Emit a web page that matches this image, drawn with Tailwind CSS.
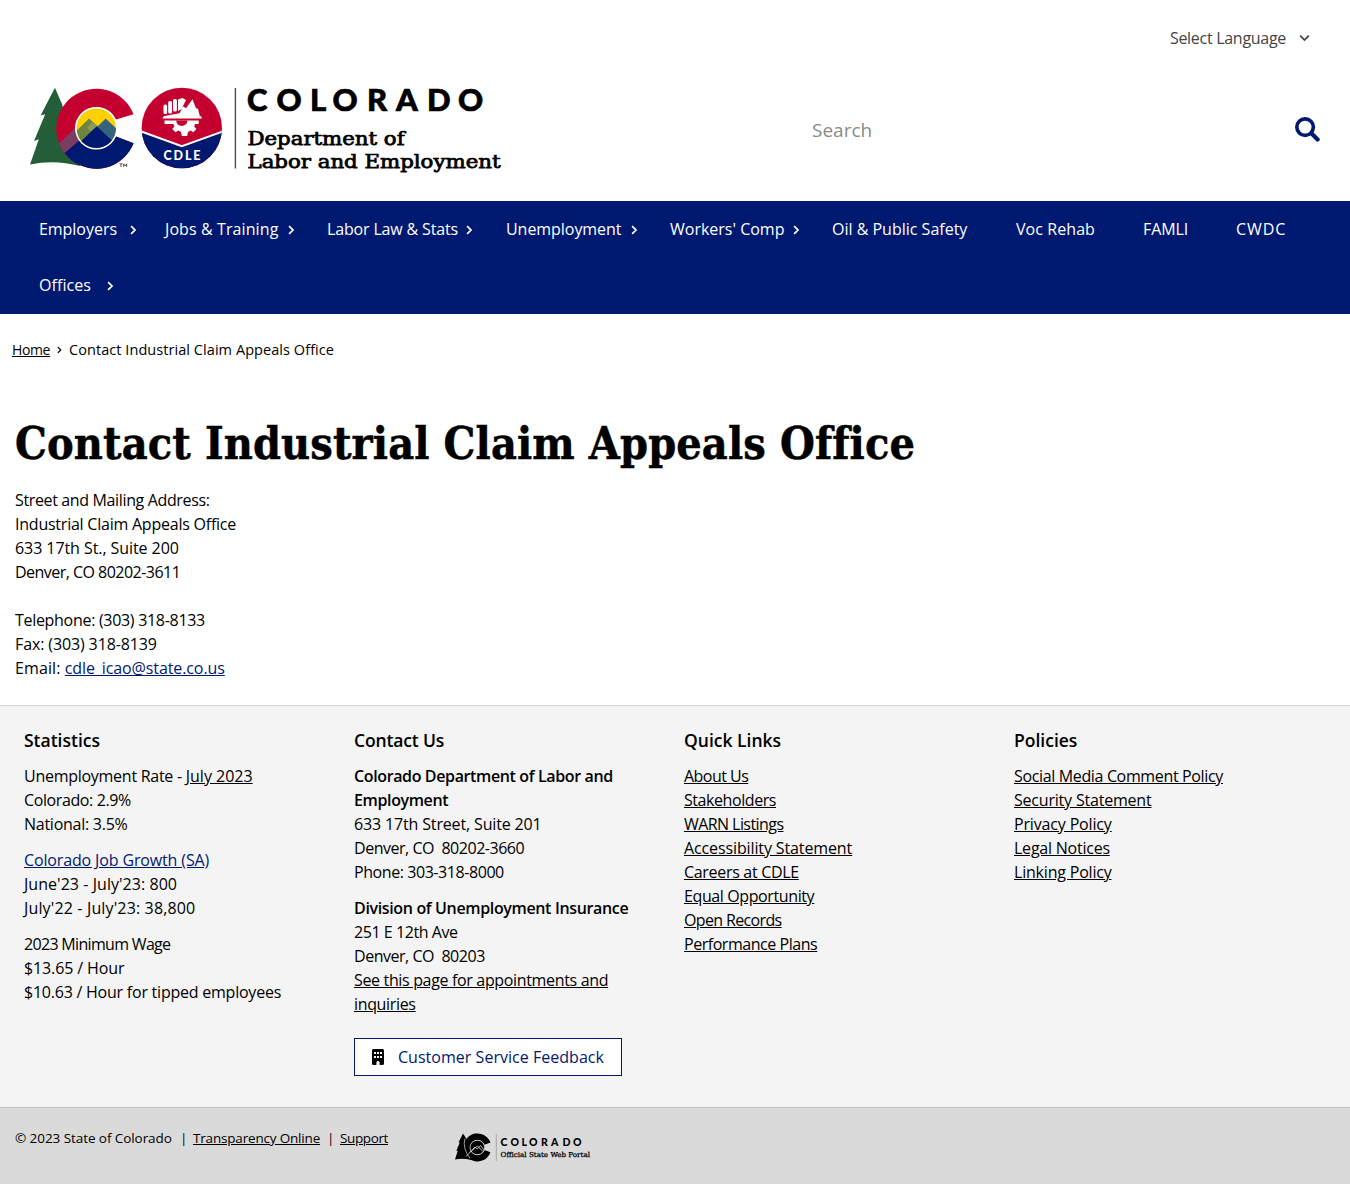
<!DOCTYPE html>
<html lang="en">
<head>
<meta charset="utf-8">
<title>Contact Industrial Claim Appeals Office</title>
<script src="https://cdn.jsdelivr.net/npm/@tailwindcss/browser@4"></script>
</head>
<body class="bg-white text-black font-['Open_Sans',sans-serif] text-base leading-6">
<svg class="hidden">
  <symbol id="chev" viewBox="0 0 8 10"><path d="M1.100 1.200 5 5l-3.900 3.800" fill="none" stroke="currentColor" stroke-width="1.700"/></symbol>
</svg>

<header class="h-[201px] flex flex-col">
  <div class="h-[76px] pr-10 flex items-center justify-end text-[#444] tracking-[-0.29px]">
    <span>Select Language</span>
    <svg class="w-[11px] h-[8px] ml-[13px]" viewBox="0 0 11 8"><path d="M1.200 1.600 5.500 6l4.300-4.400" fill="none" stroke="currentColor" stroke-width="1.700"/></svg>
  </div>
  <div class="flex-1 flex px-[30px]">
    <svg class="w-[475px] h-[100px] mt-1 shrink-0" viewBox="30 80 475 100">
      <!-- pine tree -->
      <path d="M54.900 87.800 40.600 115.400l4.600-1.100L34 141l4.800-1.800L30 164.600q24-5.500 50 1.400L62 104z" fill="#235e39"/>
      <!-- letter C -->
      <clipPath id="c"><path d="M133.600 114.300A40 40 0 1 0 133.600 143.200L116 136.500A21 21 0 1 1 116 119.500z"/></clipPath>
      <g clip-path="url(#c)">
        <path d="M50 80h90v92H50z" fill="#c3002f"/>
        <path d="M50 152 76 127 90 134 65 160z" fill="#7c3b61"/>
        <path d="M64 153.500 84 136.500h20L140 126v46H60z" fill="#001970"/>
      </g>
      <circle cx="96.300" cy="128.200" r="21.300" fill="#fff"/>
      <clipPath id="i"><circle cx="96.300" cy="128.200" r="19.700"/></clipPath>
      <g clip-path="url(#i)">
        <path d="M76 108h41v41H76z" fill="#ffd100"/>
        <path d="M70 137 89 118.500l9 8-22 22z" fill="#6d8340"/>
        <path d="m97 127 8.700-8.500L122 134v10H100z" fill="#35647e"/>
        <path d="m92.500 121.800 4.500 4.400-6 5.500-4-4z" fill="#8a9a5a"/>
        <path d="M74 148 96.700 126.200 119 147v6H74z" fill="#001970"/>
      </g>
      <path d="m119.500 163.800h3m-1.500 0v3.200m2.700 0v-3.200l1.500 2.200 1.500-2.200v3.200" fill="none" stroke="#333" stroke-width=".8"/>
      <!-- department badge -->
      <clipPath id="b"><circle cx="181.800" cy="128" r="40.200"/></clipPath>
      <g clip-path="url(#b)">
        <path d="M140 86h84v84h-84z" fill="#c3002f"/>
        <path d="M140 131.500 181.800 146.800 224 131.500V172h-84z" fill="#001970"/>
        <path d="M140 131 181.800 146.300 224 131" fill="none" stroke="#fff" stroke-width="2"/>
      </g>
      <g fill="#fff">
        <path d="M162.500 118.600q0-2.600 3.500-2.900l13.500-2.500 3.500-7 3 2 6.500-9 3.500 9 2 .5 1.700 7q2.300.3 2.300 2.900z"/>
        <rect x="163.500" y="104.500" width="3.600" height="9.500" rx="1.500"/>
        <rect x="168.200" y="101" width="3.800" height="12.500" rx="1.500"/>
        <rect x="173" y="99" width="3.900" height="12.500" rx="1.500"/>
        <path d="m178 99.500 4.500-1.500 3.500 2-4.500 9-3.500 2z"/>
        <path d="M164.500 120.400h34.200v3.600h-3.500l-1 2.800 2.300 2.200-3.200 3.300-2.600-1.700-2.700 1.300-.8 4.200h-5.400l-.8-4.200-2.700-1.300-2.800 1.700-3.300-3.300 2.200-2.500-1-2.500h-8.900z"/>
      </g>
      <path d="M176.200 120.400a5.600 5.600 0 1 0 11.200 0z" fill="#c3002f"/>
      <text x="163.500" y="159.500" font-family="Lato" font-weight="900" font-size="12.500" fill="#fff" textLength="37" lengthAdjust="spacing">CDLE</text>
      <path d="M235.400 88v80.500" stroke="#4d4d4d" stroke-width="1.400"/>
      <text x="247 276.500 310 332.500 367 396 427 458" y="111" font-family="Lato" font-weight="900" font-size="31" stroke="#000" stroke-width=".7">COLORADO</text>
      <g font-family="DejaVu Serif, serif" font-size="18.500" stroke="#000" stroke-width=".75">
        <text x="247.500" y="144.500" textLength="157" lengthAdjust="spacingAndGlyphs">Department of</text>
        <text x="247.500" y="168" textLength="253" lengthAdjust="spacingAndGlyphs">Labor and Employment</text>
      </g>
    </svg>
    <div class="ml-auto w-[508px] h-[108px] flex items-center justify-between">
      <span class="text-[19px] text-[#8a8a8a]">Search</span>
      <svg class="w-[25px] h-[25px] -mt-px" viewBox="0 0 26 26" fill="none" stroke="#001970"><circle cx="10.500" cy="10.500" r="8.600" stroke-width="3.800"/><path d="m17 17 6.500 6.500" stroke-width="4.400" stroke-linecap="round"/></svg>
    </div>
  </div>
</header>

<nav class="h-[113px] bg-[#001970] text-white px-[39px]">
  <div class="h-14 flex items-center whitespace-nowrap">
    <a class="w-[126px] flex items-center"><span class="w-[91px] tracking-[-0.04px]">Employers</span><svg class="w-2 h-2.5 mt-0.5"><use href="#chev"/></svg></a>
    <a class="w-[162px] flex items-center"><span class="w-[123px] tracking-[0.1px]">Jobs &amp; Training</span><svg class="w-2 h-2.5 mt-0.5"><use href="#chev"/></svg></a>
    <a class="w-[179px] flex items-center"><span class="w-[139px] tracking-[-0.16px]">Labor Law &amp; Stats</span><svg class="w-2 h-2.5 mt-0.5"><use href="#chev"/></svg></a>
    <a class="w-[164px] flex items-center"><span class="w-[125px] tracking-[-0.05px]">Unemployment</span><svg class="w-2 h-2.5 mt-0.5"><use href="#chev"/></svg></a>
    <a class="w-[162px] flex items-center"><span class="w-[123px]">Workers' Comp</span><svg class="w-2 h-2.5 mt-0.5"><use href="#chev"/></svg></a>
    <a class="w-[184px]">Oil &amp; Public Safety</a>
    <a class="w-[127px] tracking-[0.07px]">Voc Rehab</a>
    <a class="w-[93px] tracking-[-0.12px]">FAMLI</a>
    <a class="tracking-[0.9px]">CWDC</a>
  </div>
  <div class="h-14 flex items-center">
    <a class="flex items-center"><span class="w-[68px] tracking-[0.07px]">Offices</span><svg class="w-2 h-2.5 mt-0.5"><use href="#chev"/></svg></a>
  </div>
</nav>

<div class="h-[71px] pl-3 flex items-center text-[14px]">
  <a class="underline tracking-[-0.39px]">Home</a>
  <svg class="w-[6px] h-[8px] ml-[7px] mr-[6px]" viewBox="0 0 8 10"><use href="#chev"/></svg>
  <span class="text-[14.5px] tracking-[0.06px]">Contact Industrial Claim Appeals Office</span>
</div>

<main class="h-[320px] px-[15px]">
  <h1 class="pt-[28px] h-[103px] leading-[60px] text-[44.5px] tracking-[0.12px] font-bold font-['DejaVu_Serif_Condensed','DejaVu_Serif',serif] whitespace-nowrap [-webkit-text-stroke:0.5px_black]">Contact Industrial Claim Appeals Office</h1>
  <p><span class="tracking-[-0.36px]">Street and Mailing Address:</span><br><span class="tracking-[-0.23px]">Industrial Claim Appeals Office</span><br><span class="tracking-[-0.07px]">633 17th St., Suite 200</span><br><span class="tracking-[-0.53px]">Denver, CO 80202-3611</span></p>
  <p class="mt-6"><span class="tracking-[-0.3px]">Telephone: (303) 318-8133</span><br><span class="tracking-[-0.12px]">Fax: (303) 318-8139</span><br><span class="tracking-[0.1px]">Email: </span><a class="underline text-[#001970] tracking-[-0.1px]">cdle_icao@state.co.us</a></p>
</main>

<footer>
  <div class="h-[402px] bg-[#f4f4f4] border-t border-[#d5d5d5] pl-6 pt-[22px] grid grid-cols-[330px_330px_330px_1fr]">
    <section>
      <h2 class="font-semibold text-[17.5px] tracking-[0px]">Statistics</h2>
      <p class="mt-3"><span class="tracking-[-0.27px]">Unemployment Rate - </span><a class="underline">July 2023</a><br><span class="tracking-[-0.39px]">Colorado: 2.9%</span><br><span class="tracking-[-0.26px]">National: 3.5%</span></p>
      <p class="mt-3"><a class="underline text-[#001970] tracking-[-0.14px]">Colorado Job Growth (SA)</a><br><span class="tracking-[0.05px]">June'23 - July'23: 800</span><br><span class="tracking-[0.15px]">July'22 - July'23: 38,800</span></p>
      <p class="mt-3"><span class="tracking-[-0.68px]">2023 Minimum Wage</span><br><span class="tracking-[-0.12px]">$13.65 / Hour</span><br><span class="tracking-[-0.23px]">$10.63 / Hour for tipped employees</span></p>
    </section>
    <section>
      <h2 class="font-semibold text-[17.5px] tracking-[-0.15px]">Contact Us</h2>
      <p class="mt-3"><b class="font-semibold tracking-[-0.37px]">Colorado Department of Labor and<br>Employment</b><br><span class="tracking-[-0.15px]">633 17th Street, Suite 201</span><br><span class="tracking-[-0.47px]">Denver, CO&nbsp; 80202-3660</span><br><span class="tracking-[-0.43px]">Phone: 303-318-8000</span></p>
      <p class="mt-3"><b class="font-semibold tracking-[-0.35px]">Division of Unemployment Insurance</b><br><span class="tracking-[-0.44px]">251 E 12th Ave</span><br><span class="tracking-[-0.47px]">Denver, CO&nbsp; 80203</span><br><a class="underline tracking-[-0.34px]">See this page for appointments and<br>inquiries</a></p>
      <a class="mt-[22px] w-[268px] h-[38px] flex items-center border border-[#001970] bg-white text-[#001970] tracking-[0.03px] pl-[17px]">
        <svg class="w-3 h-4 mr-[14px] shrink-0" viewBox="0 0 12 16"><path d="M1.500 0h9Q12 0 12 1.500v13q0 1.500-1.500 1.500H7.600v-2.500a1.600 1.600 0 0 0-3.200 0V16H1.500Q0 16 0 14.500v-13Q0 0 1.500 0z" fill="#000"/><path d="M2 3h2v2H2zm3 0h2v2H5zm3 0h2v2H8zM2 7h2v2H2zm3 0h2v2H5zm3 0h2v2H8z" fill="#fff"/></svg>
        Customer Service Feedback
      </a>
    </section>
    <section>
      <h2 class="font-semibold text-[17.5px] tracking-[0px]">Quick Links</h2>
      <ul class="mt-3 underline">
        <li class="tracking-[-0.53px]">About Us</li>
        <li class="tracking-[-0.43px]">Stakeholders</li>
        <li class="tracking-[-0.57px]">WARN Listings</li>
        <li class="tracking-[-0.12px]">Accessibility Statement</li>
        <li class="tracking-[-0.31px]">Careers at CDLE</li>
        <li class="tracking-[-0.39px]">Equal Opportunity</li>
        <li class="tracking-[-0.64px]">Open Records</li>
        <li class="tracking-[-0.46px]">Performance Plans</li>
      </ul>
    </section>
    <section>
      <h2 class="font-semibold text-[17.5px] tracking-[0px]">Policies</h2>
      <ul class="mt-3 underline">
        <li class="tracking-[-0.35px]">Social Media Comment Policy</li>
        <li class="tracking-[-0.2px]">Security Statement</li>
        <li class="tracking-[-0.16px]">Privacy Policy</li>
        <li class="tracking-[-0.23px]">Legal Notices</li>
        <li class="tracking-[-0.2px]">Linking Policy</li>
      </ul>
    </section>
  </div>
  <div class="h-[77px] bg-[#dadada] border-t border-[#bfbfbf] pl-[15px] pt-[18px] flex text-[13.5px]">
    <p class="w-[440px] flex whitespace-nowrap"><span class="w-[165px] tracking-[-0.07px]">© 2023 State of Colorado</span><span class="w-[13px]">|</span><a class="w-[134px]"><span class="underline tracking-[-0.18px]">Transparency Online</span></a><span class="w-[13px]">|</span><a class="underline tracking-[-0.37px]">Support</a></p>
    <svg class="w-[137px] h-[32px] mt-[6px]" viewBox="455 1132 137 32">
      <path d="M463 1133.500l-4.500 9 1.300-.3-3.500 8.800 1.500-.6-2.800 9q8-1.500 16 .5v-14z"/>
      <path d="M490.500 1142.500a14 14 0 1 0 0 9.800l-6-2.300a7.500 7.500 0 1 1 0-5.200z"/>
      <path d="M465 1138.500q-3 9 5 20" fill="none" stroke="#dadada" stroke-width=".7"/>
      <circle cx="477.300" cy="1147.500" r="7.300" stroke="#dadada" stroke-width=".8"/>
      <path d="m466 1156.500 9-9.500 2.500 2 3-3.500 4 5m-15 2 8-6.500 5.500 5.500" fill="none" stroke="#dadada" stroke-width=".8"/>
      <path d="M496.300 1134v27" stroke="#999" stroke-width=".8"/>
      <text x="500.500 510.500 521.500 529 541 551 562.500 573" y="1145.500" font-family="Lato" font-weight="900" font-size="10.500">COLORADO</text>
      <text x="500.500" y="1157" font-family="DejaVu Serif, serif" font-size="6.800" stroke="#000" stroke-width=".25" textLength="89.500" lengthAdjust="spacingAndGlyphs">Official State Web Portal</text>
    </svg>
  </div>
</footer>
</body>
</html>
